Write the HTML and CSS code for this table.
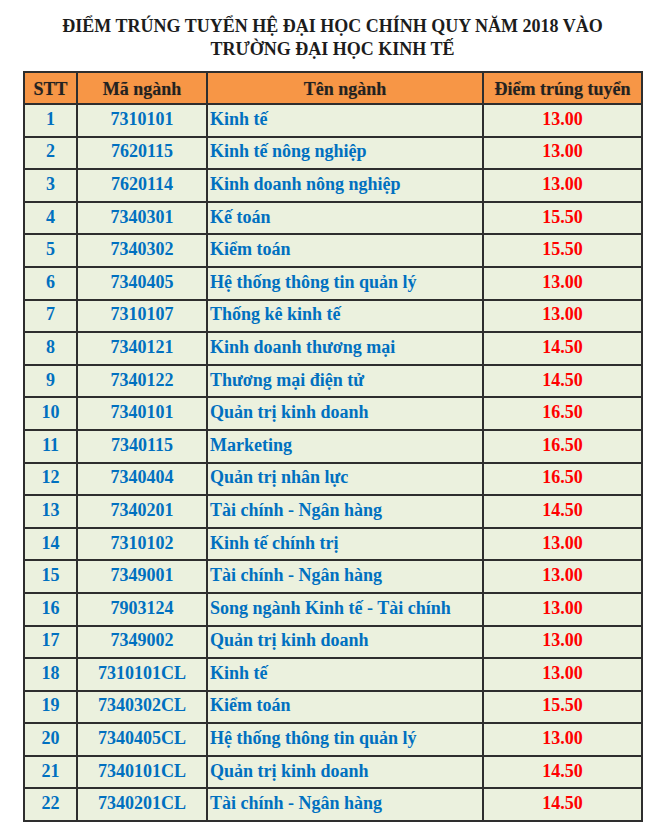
FILE: index.html
```html
<!DOCTYPE html>
<html lang="vi">
<head>
<meta charset="utf-8">
<title>Điểm trúng tuyển</title>
<link rel="stylesheet" href="styles.css">
</head>
<body>
<div class="page">
  <h1 class="title">ĐIỂM TRÚNG TUYỂN HỆ ĐẠI HỌC CHÍNH QUY NĂM 2018 VÀO<br>TRƯỜNG ĐẠI HỌC KINH TẾ</h1>
  <table class="scores">
    <colgroup>
      <col class="c-stt"><col class="c-ma"><col class="c-ten"><col class="c-diem">
    </colgroup>
    <thead>
      <tr><th>STT</th><th>Mã ngành</th><th>Tên ngành</th><th>Điểm trúng tuyển</th></tr>
    </thead>
    <tbody>
      <tr><td class="num">1</td><td class="code">7310101</td><td class="name">Kinh tế</td><td class="score">13.00</td></tr>
      <tr><td class="num">2</td><td class="code">7620115</td><td class="name">Kinh tế nông nghiệp</td><td class="score">13.00</td></tr>
      <tr><td class="num">3</td><td class="code">7620114</td><td class="name">Kinh doanh nông nghiệp</td><td class="score">13.00</td></tr>
      <tr><td class="num">4</td><td class="code">7340301</td><td class="name">Kế toán</td><td class="score">15.50</td></tr>
      <tr><td class="num">5</td><td class="code">7340302</td><td class="name">Kiểm toán</td><td class="score">15.50</td></tr>
      <tr><td class="num">6</td><td class="code">7340405</td><td class="name">Hệ thống thông tin quản lý</td><td class="score">13.00</td></tr>
      <tr><td class="num">7</td><td class="code">7310107</td><td class="name">Thống kê kinh tế</td><td class="score">13.00</td></tr>
      <tr><td class="num">8</td><td class="code">7340121</td><td class="name">Kinh doanh thương mại</td><td class="score">14.50</td></tr>
      <tr><td class="num">9</td><td class="code">7340122</td><td class="name">Thương mại điện tử</td><td class="score">14.50</td></tr>
      <tr><td class="num">10</td><td class="code">7340101</td><td class="name">Quản trị kinh doanh</td><td class="score">16.50</td></tr>
      <tr><td class="num">11</td><td class="code">7340115</td><td class="name">Marketing</td><td class="score">16.50</td></tr>
      <tr><td class="num">12</td><td class="code">7340404</td><td class="name">Quản trị nhân lực</td><td class="score">16.50</td></tr>
      <tr><td class="num">13</td><td class="code">7340201</td><td class="name">Tài chính - Ngân hàng</td><td class="score">14.50</td></tr>
      <tr><td class="num">14</td><td class="code">7310102</td><td class="name">Kinh tế chính trị</td><td class="score">13.00</td></tr>
      <tr><td class="num">15</td><td class="code">7349001</td><td class="name">Tài chính - Ngân hàng</td><td class="score">13.00</td></tr>
      <tr><td class="num">16</td><td class="code">7903124</td><td class="name">Song ngành Kinh tế - Tài chính</td><td class="score">13.00</td></tr>
      <tr><td class="num">17</td><td class="code">7349002</td><td class="name">Quản trị kinh doanh</td><td class="score">13.00</td></tr>
      <tr><td class="num">18</td><td class="code">7310101CL</td><td class="name">Kinh tế</td><td class="score">13.00</td></tr>
      <tr><td class="num">19</td><td class="code">7340302CL</td><td class="name">Kiểm toán</td><td class="score">15.50</td></tr>
      <tr><td class="num">20</td><td class="code">7340405CL</td><td class="name">Hệ thống thông tin quản lý</td><td class="score">13.00</td></tr>
      <tr><td class="num">21</td><td class="code">7340101CL</td><td class="name">Quản trị kinh doanh</td><td class="score">14.50</td></tr>
      <tr><td class="num">22</td><td class="code">7340201CL</td><td class="name">Tài chính - Ngân hàng</td><td class="score">14.50</td></tr>
    </tbody>
  </table>
</div>
</body>
</html>
```

FILE: styles.css
```css
html, body {
  margin: 0;
  padding: 0;
  background: #ffffff;
}

.page {
  width: 665px;
  font-family: "Liberation Serif", "Times New Roman", serif;
  font-weight: bold;
}

.title {
  margin: 0;
  padding-top: 15px;
  font-size: 18px;
  line-height: 23px;
  font-weight: bold;
  text-align: center;
  color: #1c1c1c;
  height: 71px;
  box-sizing: border-box;
}

.scores {
  margin-left: 23px;
  width: 618px;
  border-collapse: collapse;
  table-layout: fixed;
  border: 2px solid #555555;
  font-size: 18px;
}

.c-stt { width: 53px; }
.c-ma { width: 130px; }
.c-ten { width: 276px; }
.c-diem { width: 159px; }

.scores th,
.scores td {
  border: 2px solid #2e2e2e;
  padding: 0 2px;
  white-space: nowrap;
  overflow: hidden;
}

.scores thead tr {
  height: 32px;
}

.scores tbody tr {
  height: 32.6px;
}

.scores th {
  background: #f79646;
  color: #222222;
  text-align: center;
  font-weight: bold;
  padding-top: 3px;
  text-shadow: 0 0 1px rgba(0, 0, 0, 0.25);
}

.scores td {
  background: #ebf1de;
  color: #0070c0;
  padding-top: 0;
  padding-bottom: 2px;
}

.scores td.num,
.scores td.code,
.scores td.score {
  text-align: center;
}

.scores td.name {
  text-align: left;
}

.scores td.score {
  color: #ff0000;
}
```
